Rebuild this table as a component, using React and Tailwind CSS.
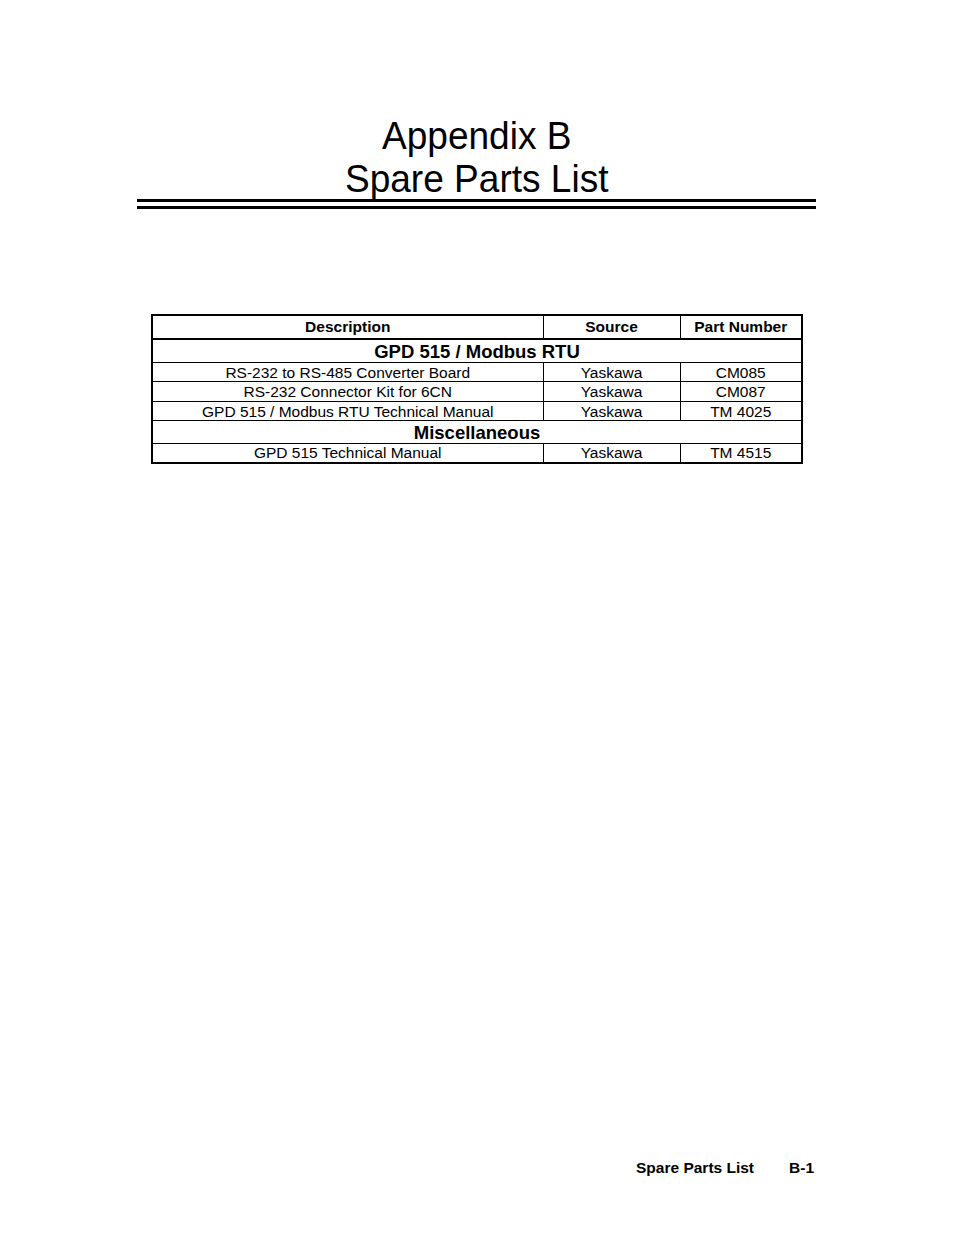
import React from 'react'

const rows1 = [
  {desc: 'RS-232 to RS-485 Converter Board', source: 'Yaskawa', part: 'CM085'},
  {desc: 'RS-232 Connector Kit for 6CN', source: 'Yaskawa', part: 'CM087'},
  {desc: 'GPD 515 / Modbus RTU Technical Manual', source: 'Yaskawa', part: 'TM 4025'}
]

const rows2 = [
  {desc: 'GPD 515 Technical Manual', source: 'Yaskawa', part: 'TM 4515'}
]

const Row = ({desc, source, part}) => (
  <tr className="h-[19.5px] text-[15.5px] leading-none">
    <td className="border-b border-black text-center pt-[1px]">{desc}</td>
    <td className="border-b border-l border-black text-center pt-[1px]">{source}</td>
    <td className="border-b border-l border-black text-center pt-[1px]">{part}</td>
  </tr>
)

const Group = ({title}) => (
  <tr className="h-[22px] text-[18.5px] leading-none font-bold">
    <td colSpan={3} className="border-b border-black text-center pt-[3px]">
      {title}
    </td>
  </tr>
)

const App = () => (
  <div
    className="relative w-[954px] h-[1235px] bg-white text-black"
    style={{fontFamily: '"Liberation Sans", Arial, sans-serif'}}>
    <div className="pt-[114px] ml-[137px] w-[679px]">
      <h1 className="text-center text-[39px] leading-[43px] font-normal">
        <span className="inline-block scale-x-[0.95]">Appendix B</span>
        <br />
        <span className="inline-block scale-x-[0.95]">Spare Parts List</span>
      </h1>
      <div className="-mt-[1px] h-[3px] bg-black" />
      <div className="mt-[4px] h-[3px] bg-black" />
    </div>

    <div className="mt-[105px] ml-[151px] w-[652px]">
      <table className="w-full border-collapse border-2 border-black">
        <colgroup>
          <col className="w-[391px]" />
          <col className="w-[137px]" />
          <col />
        </colgroup>
        <thead>
          <tr className="h-[24px] text-[15.5px] leading-none font-bold">
            <th className="border-b-2 border-black text-center">Description</th>
            <th className="border-b-2 border-l border-black text-center">Source</th>
            <th className="border-b-2 border-l border-black text-center">Part Number</th>
          </tr>
        </thead>
        <tbody>
          <Group title="GPD 515 / Modbus RTU" />
          {rows1.map(r => (
            <Row key={r.part} {...r} />
          ))}
          <Group title="Miscellaneous" />
          {rows2.map(r => (
            <Row key={r.part} {...r} />
          ))}
        </tbody>
      </table>
    </div>

    <div className="absolute top-[1160px] left-[636px] flex text-[15.5px] font-bold leading-none">
      <span>Spare Parts List</span>
      <span className="ml-[35px]">B-1</span>
    </div>
  </div>
)

export default App
